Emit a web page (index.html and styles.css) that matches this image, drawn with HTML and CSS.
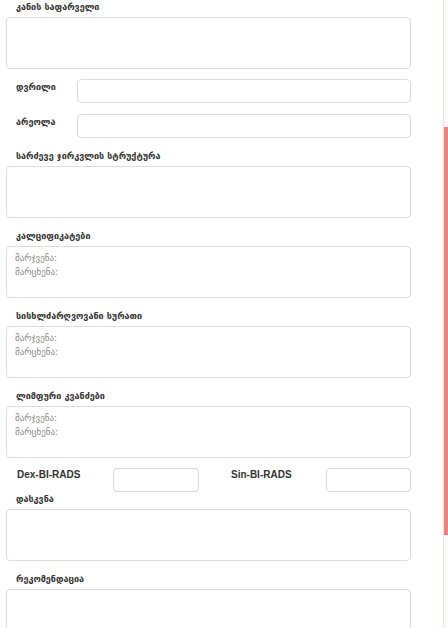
FILE: index.html
```html
<!DOCTYPE html>
<html lang="ka">
<head>
  <meta charset="UTF-8">
  <meta name="viewport" content="width=device-width, initial-scale=1.0">
  <title>ძუძუს ექოსკოპია</title>
  <link rel="stylesheet" href="styles.css">
</head>
<body>
  <form class="report">
    <div class="field">
      <label>კანის საფარველი</label>
      <textarea></textarea>
    </div>

    <div class="row">
      <label>დვრილი</label>
      <input type="text">
    </div>
    <div class="row">
      <label>არეოლა</label>
      <input type="text">
    </div>

    <div class="field">
      <label>სარძევე ჯირკვლის სტრუქტურა</label>
      <textarea></textarea>
    </div>
    <div class="field">
      <label>კალციფიკატები</label>
      <textarea placeholder="მარჯვენა:&#10;მარცხენა:"></textarea>
    </div>
    <div class="field">
      <label>სისხლძარღვოვანი სურათი</label>
      <textarea placeholder="მარჯვენა:&#10;მარცხენა:"></textarea>
    </div>
    <div class="field">
      <label>ლიმფური კვანძები</label>
      <textarea placeholder="მარჯვენა:&#10;მარცხენა:"></textarea>
    </div>

    <div class="rads">
      <label class="rads-label">Dex-BI-RADS</label>
      <input type="text" class="rads-input">
      <label class="rads-label second">Sin-BI-RADS</label>
      <input type="text" class="rads-input">
    </div>

    <div class="field">
      <label>დასკვნა</label>
      <textarea></textarea>
    </div>
    <div class="field">
      <label>რეკომენდაცია</label>
      <textarea></textarea>
    </div>
  </form>

  <aside class="scrollbar">
    <div class="thumb"></div>
  </aside>
</body>
</html>
```

FILE: styles.css
```css
body {
  margin: 0;
  display: flex;
  height: 628px;
  overflow: hidden;
  background-color: #fff;
  font-family: "DejaVu Sans", "Liberation Sans", sans-serif;
  color: #333;
}

.report {
  width: 405px;
  padding: 0 32px 0 6px;
  flex-shrink: 0;
}

label {
  display: block;
  font-size: 9px;
  font-weight: bold;
  line-height: 14px;
}

textarea,
input {
  box-sizing: border-box;
  border: 1px solid #dcdcdc;
  border-radius: 4px;
  background-color: #fff;
  font-family: "DejaVu Sans", sans-serif;
  font-size: 9px;
  color: #555;
  outline: none;
}

textarea {
  display: block;
  width: 100%;
  height: 52px;
  padding: 4px 8px;
  line-height: 14px;
  resize: none;
}

textarea::placeholder {
  color: #888;
}

.field {
  margin-bottom: 11px;
}

.field label {
  padding-left: 10px;
  margin-bottom: 3px;
}

.field:first-child {
  margin-bottom: 10px;
}

.row {
  display: flex;
  align-items: flex-start;
  margin-bottom: 11px;
}

.row label {
  width: 61px;
  padding-left: 10px;
  margin-top: 1px;
}

.row input {
  flex: 1;
  height: 24px;
}

.rads {
  display: flex;
  align-items: flex-start;
  margin-top: -1px;
}

.rads-label {
  width: 96px;
  padding-left: 11px;
  font-family: "Liberation Sans", Arial, sans-serif;
  font-size: 10px;
  color: #333;
}

.rads-label.second {
  width: 95px;
  padding-left: 32px;
}

.rads-input {
  width: 86px;
  height: 24px;
}

.rads-input:last-child {
  width: 85px;
}

.scrollbar {
  width: 4px;
  height: 628px;
  border-left: 1px solid #f5dede;
  background-color: #fdf9f9;
}

.thumb {
  height: 408px;
  margin-top: 127px;
  background-color: #e98585;
}
```
